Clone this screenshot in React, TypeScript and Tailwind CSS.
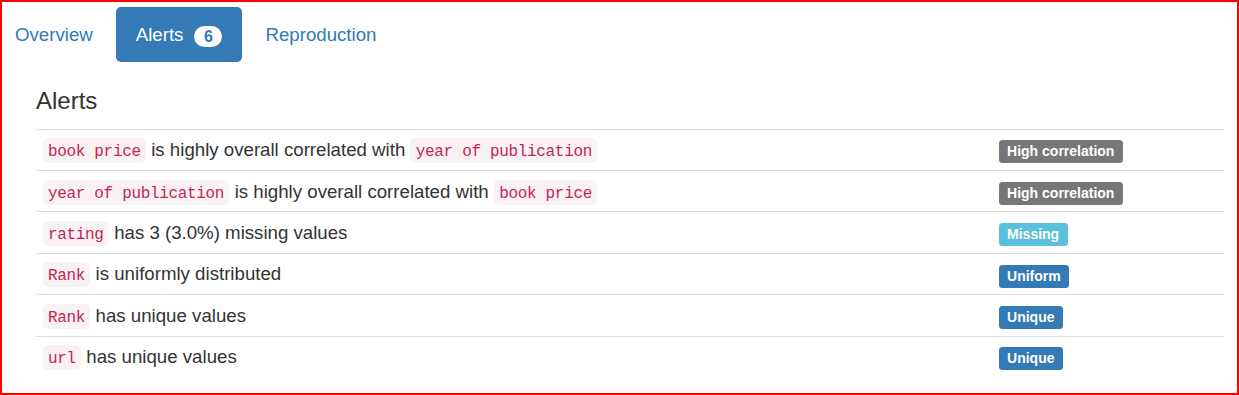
import React from "react";

type Row = {
  parts: Array<{ code?: string; text?: string }>;
  label: string;
  kind: "default" | "info" | "primary";
};

const rows: Row[] = [
  {
    parts: [{ code: "book price" }, { text: " is highly overall correlated with " }, { code: "year of publication" }],
    label: "High correlation",
    kind: "default",
  },
  {
    parts: [{ code: "year of publication" }, { text: " is highly overall correlated with " }, { code: "book price" }],
    label: "High correlation",
    kind: "default",
  },
  { parts: [{ code: "rating" }, { text: " has 3 (3.0%) missing values" }], label: "Missing", kind: "info" },
  { parts: [{ code: "Rank" }, { text: " is uniformly distributed" }], label: "Uniform", kind: "primary" },
  { parts: [{ code: "Rank" }, { text: " has unique values" }], label: "Unique", kind: "primary" },
  { parts: [{ code: "url" }, { text: " has unique values" }], label: "Unique", kind: "primary" },
];

function Code({ children }: { children: React.ReactNode }) {
  return (
    <code className="font-['Liberation_Mono',monospace] text-[16px] leading-none tracking-[-0.33px] pt-[5px] pb-[2px] px-[5.33px] rounded-[5px] bg-[#f9f2f4] text-[#c7254e]">
      {children}
    </code>
  );
}

function Label({ kind, children }: { kind: Row["kind"]; children: React.ReactNode }) {
  const bg =
    kind === "default" ? "bg-[#777777]" : kind === "info" ? "bg-[#5bc0de]" : "bg-[#337ab7]";
  return (
    <span
      className={`${bg} text-white font-bold text-[14px] leading-none px-[8.4px] pt-[2.8px] pb-[4.2px] rounded-[3.5px]`}
    >
      {children}
    </span>
  );
}

export default function App() {
  return (
    <div className="w-[1239px] h-[395px] border-2 border-[#ff0000] bg-white font-['Liberation_Sans',Arial,sans-serif] text-[18.67px] text-[#333333] overflow-hidden">
      <nav className="flex items-start gap-[3px] pt-[5px]">
        <a className="block pl-[13px] pr-[20px] pt-[15px] pb-[13.5px] leading-[26.67px] text-[#337ab7] rounded-[5px]">
          Overview
        </a>
        <a className="block px-[20px] pt-[15px] pb-[13.5px] leading-[26.67px] text-white bg-[#337ab7] rounded-[5px]">
          Alerts
          <span className="inline-block align-middle ml-[11px] min-w-[28px] h-[21px] leading-[21px] px-[9.33px] text-[16px] font-bold text-center rounded-full bg-white text-[#337ab7]">
            6
          </span>
        </a>
        <a className="block px-[20px] pt-[15px] pb-[13.5px] leading-[26.67px] text-[#337ab7] rounded-[5px]">
          Reproduction
        </a>
      </nav>
      <div className="pl-[34px] pr-[13px]">
        <h4 className="mt-[26px] text-[24px] leading-[1.1] font-normal text-[#333333]">Alerts</h4>
        <div className="mt-[14px]">
          {rows.map((r, i) => (
            <div key={i} className="flex h-[41.4px] border-t border-[#dddddd]">
              <div className="flex-1 px-[6.67px] py-[6.7px] leading-[27px] whitespace-nowrap">
                {r.parts.map((p, j) =>
                  p.code ? <Code key={j}>{p.code}</Code> : <span key={j} className="whitespace-pre">{p.text}</span>
                )}
              </div>
              <div className="w-[232px] px-[6.67px] py-[6.7px] leading-[27px]">
                <Label kind={r.kind}>{r.label}</Label>
              </div>
            </div>
          ))}
        </div>
      </div>
    </div>
  );
}
